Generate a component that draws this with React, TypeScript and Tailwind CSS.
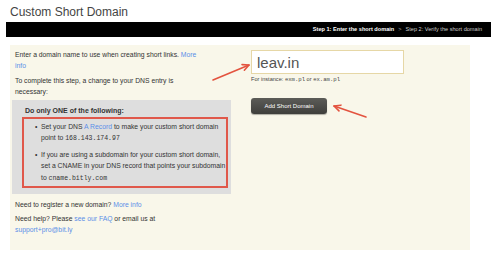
import React from 'react';

const font = { fontFamily: '"Liberation Sans", Arial, sans-serif' };
const mono = { fontFamily: '"Liberation Mono", "Courier New", monospace' };

const Arrow: React.FC<{ x1: number; y1: number; x2: number; y2: number }> = ({ x1, y1, x2, y2 }) => {
  const a = Math.atan2(y2 - y1, x2 - x1);
  const len = 7;
  const p1 = [x2 - len * Math.cos(a - 0.45), y2 - len * Math.sin(a - 0.45)];
  const p2 = [x2 - len * Math.cos(a + 0.45), y2 - len * Math.sin(a + 0.45)];
  return (
    <g stroke="#e3533f" strokeWidth={1.6} fill="none" strokeLinecap="round" strokeLinejoin="round">
      <line x1={x1} y1={y1} x2={x2} y2={y2} />
      <polyline points={`${p1[0]},${p1[1]} ${x2},${y2} ${p2[0]},${p2[1]}`} />
    </g>
  );
};

export default function App() {
  return (
    <div className="relative w-[500px] h-[261px] bg-white overflow-hidden" style={font}>
      <h1 className="pl-[10px] pt-[5px] text-[12px] leading-[14px] text-[#444]">Custom Short Domain</h1>

      {/* step bar */}
      <div className="ml-[6px] w-[485px] mt-[3px] h-[15px] bg-black flex items-center justify-end pr-[9px] text-[5.6px] gap-[4px]">
        <span className="text-white font-bold">Step 1: Enter the short domain</span>
        <span className="text-[#aaa]">&gt;</span>
        <span className="text-[#ccc]">Step 2: Verify the short domain</span>
      </div>

      {/* main panel */}
      <div className="ml-[10px] w-[460px] mt-[8px] h-[205px] bg-[#f9f7ea] flex pl-[2px] pt-[4px] text-[6.8px] leading-[11px] text-[#333]">
        <div className="w-[219px]">
          <p className="pl-[3px] pr-[24px]">
            Enter a domain name to use when creating short links. <span className="text-[#5b8fe8]">More info</span>
          </p>
          <p className="pl-[3px] pr-[24px] mt-[4px]">To complete this step, a change to your DNS entry is necessary:</p>

          <div className="mt-[3px] bg-[#dedede] pt-[5px] pb-[6px] pl-[10px] pr-[3px]">
            <p className="font-bold pl-[3px] text-[7px] leading-[11px]">Do only ONE of the following:</p>
            <div className="mt-[1px] border-2 border-[#e0584a] py-[2px] leading-[11.3px]">
              <ul className="pl-[11px]">
                <li className="flex">
                  <span className="w-[6px] shrink-0">•</span>
                  <span>
                    Set your DNS <span className="text-[#5b8fe8]">A Record</span> to make your custom short domain point to{' '}
                    <span className="text-[6.5px]" style={mono}>168.143.174.97</span>
                  </span>
                </li>
                <li className="flex mt-[4.5px]">
                  <span className="w-[6px] shrink-0">•</span>
                  <span>
                    If you are using a subdomain for your custom short domain, set a CNAME in your DNS record that points your subdomain to{' '}
                    <span className="text-[6.5px]" style={mono}>cname.bitly.com</span>
                  </span>
                </li>
              </ul>
            </div>
          </div>

          <p className="pl-[3px] mt-[5px]">
            Need to register a new domain? <span className="text-[#5b8fe8]">More info</span>
          </p>
          <p className="pl-[3px] mt-[3px] pr-[50px]">
            Need help? Please <span className="text-[#5b8fe8]">see our FAQ</span> or email us at{' '}
            <span className="text-[#5b8fe8]">support+pro@bit.ly</span>
          </p>
        </div>

        <div className="ml-[20px] pt-[1px]">
          <div className="w-[153px] h-[24px] border border-[#e6d7a6] bg-white flex items-center pl-[5px] text-[15px] text-[#555]">
            leav.in
          </div>
          <p className="text-[5.6px] leading-[10px] text-[#444]">
            For instance: <span style={mono}>exm.pl</span> or <span style={mono}>ex.am.pl</span>
          </p>
          <button className="mt-[13px] w-[76px] h-[16px] rounded-[3px] bg-gradient-to-b from-[#5c5c58] to-[#3f3f3c] text-white text-[6px] flex items-center justify-center shadow-[0_1px_1px_rgba(0,0,0,0.3)]">
            Add Short Domain
          </button>
        </div>
      </div>

      <svg className="absolute inset-0 pointer-events-none" width={500} height={261}>
        <Arrow x1={213} y1={80} x2={249} y2={65} />
        <Arrow x1={366} y1={117} x2={334} y2={106} />
      </svg>
    </div>
  );
}
